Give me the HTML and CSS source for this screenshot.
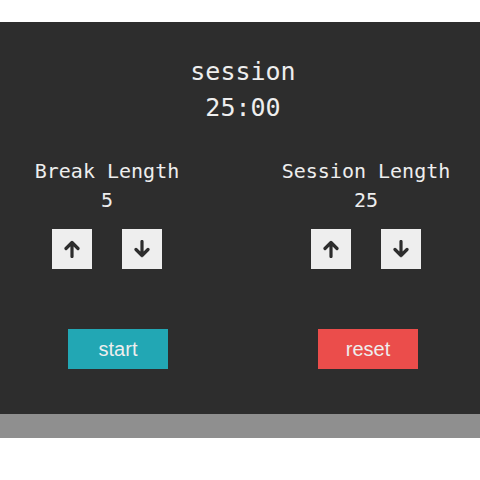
FILE: index.html
```html
<!DOCTYPE html>
<html>
<head>
<meta charset="utf-8">
<link rel="stylesheet" href="styles.css">
</head>
<body>
<div class="top"></div>
<main class="panel">
  <div class="timer">
    <div class="label">session</div>
    <div class="time">25:00</div>
  </div>
  <div class="settings">
    <div class="setting">
      <div class="name">Break Length</div>
      <div class="value">5</div>
      <div class="arrows">
        <button class="arrow"><svg width="18" height="18" viewBox="0 0 18 18"><path d="M9 16.5V2.5M3 8.5L9 2.5L15 8.5" fill="none" stroke="#2d2d2d" stroke-width="3.2" stroke-linecap="round" stroke-linejoin="round"/></svg></button>
        <button class="arrow"><svg width="18" height="18" viewBox="0 0 18 18"><path d="M9 1.5V15.5M3 9.5L9 15.5L15 9.5" fill="none" stroke="#2d2d2d" stroke-width="3.2" stroke-linecap="round" stroke-linejoin="round"/></svg></button>
      </div>
    </div>
    <div class="setting">
      <div class="name">Session Length</div>
      <div class="value">25</div>
      <div class="arrows">
        <button class="arrow"><svg width="18" height="18" viewBox="0 0 18 18"><path d="M9 16.5V2.5M3 8.5L9 2.5L15 8.5" fill="none" stroke="#2d2d2d" stroke-width="3.2" stroke-linecap="round" stroke-linejoin="round"/></svg></button>
        <button class="arrow"><svg width="18" height="18" viewBox="0 0 18 18"><path d="M9 1.5V15.5M3 9.5L9 15.5L15 9.5" fill="none" stroke="#2d2d2d" stroke-width="3.2" stroke-linecap="round" stroke-linejoin="round"/></svg></button>
      </div>
    </div>
  </div>
  <div class="controls">
    <div class="ctl-cell"><button class="ctl start">start</button></div>
    <div class="ctl-cell ctl-right"><button class="ctl reset">reset</button></div>
  </div>
</main>
<div class="bar"></div>
</body>
</html>
```

FILE: styles.css
```css
html, body {
  margin: 0;
  padding: 0;
  background: #ffffff;
}
body {
  font-family: "DejaVu Sans Mono", "Liberation Mono", monospace;
  color: #eeeeee;
}
.top {
  height: 22px;
}
.panel {
  background: #2d2d2d;
  height: 392px;
  box-sizing: border-box;
  padding-top: 32px;
  display: flex;
  flex-direction: column;
}
.timer {
  text-align: center;
  font-size: 25px;
  line-height: 36px;
  padding-left: 6px;
}
.settings {
  margin-top: 31px;
  display: grid;
  grid-template-columns: 214px 228px;
  column-gap: 38px;
}
.setting {
  display: flex;
  flex-direction: column;
  align-items: center;
}
.name {
  font-size: 20px;
  line-height: 28px;
}
.value {
  font-size: 20px;
  line-height: 28px;
  margin-top: 1px;
}
.arrows {
  margin-top: 15px;
  display: flex;
  gap: 30px;
}
.arrow {
  width: 40px;
  height: 40px;
  border: 0;
  padding: 0;
  background: #eeeeee;
  display: flex;
  align-items: center;
  justify-content: center;
}
.controls {
  margin-top: 60px;
  display: grid;
  grid-template-columns: 236px 244px;
}
.ctl-cell {
  display: flex;
  justify-content: center;
}
.ctl-right {
  padding-left: 20px;
}
.ctl {
  width: 100px;
  height: 40px;
  border: 0;
  padding: 0;
  font-family: "Liberation Sans", Arial, sans-serif;
  font-size: 20px;
  color: #eeeeee;
}
.start {
  background: #22a7b4;
}
.reset {
  background: #eb4d4b;
}
.bar {
  height: 24px;
  background: #8f8f8f;
}
```
